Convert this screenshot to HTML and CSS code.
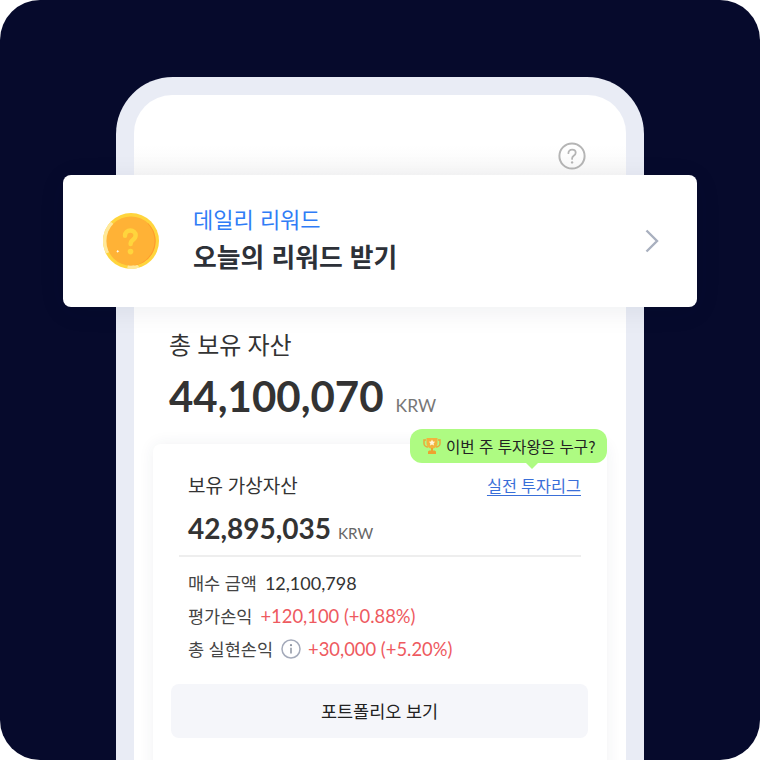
FILE: index.html
```html
<!DOCTYPE html>
<html lang="ko">
<head>
<meta charset="utf-8">
<title>데일리 리워드</title>
<link rel="stylesheet" href="styles.css">
</head>
<body>
<main class="stage">
  <div class="phone">
    <div class="screen">
      <div class="topbar">
        <svg class="help" width="28" height="28" viewBox="0 0 28 28" fill="none">
          <circle cx="14" cy="14" r="12.6" stroke="#b5b5b5" stroke-width="2"/>
          <path d="M10.4 11.2c0-2.2 1.6-3.6 3.7-3.6s3.6 1.3 3.6 3.1c0 1.5-.9 2.3-2 3.1-1 .7-1.6 1.3-1.6 2.6v.5" stroke="#b5b5b5" stroke-width="1.8" stroke-linecap="round"/>
          <circle cx="14.1" cy="20.4" r="1.2" fill="#b5b5b5"/>
        </svg>
      </div>
      <section class="assets">
        <h2 class="assets-label">총 보유 자산</h2>
        <p class="assets-total"><strong>44,100,070</strong><span>KRW</span></p>
      </section>
      <section class="card">
        <div class="card-head">
          <span class="card-title">보유 가상자산</span>
          <a class="league" href="#">실전 투자리그</a>
        </div>
        <p class="card-total"><strong>42,895,035</strong><span>KRW</span></p>
        <ul class="stats">
          <li><span class="stat-label">매수 금액</span><span class="amount">12,100,798</span></li>
          <li><span class="stat-label">평가손익</span><span class="gain">+120,100 (+0.88%)</span></li>
          <li><span class="stat-label">총 실현손익</span>
            <svg class="info" width="20" height="20" viewBox="0 0 20 20" fill="none">
              <circle cx="10" cy="10" r="9" stroke="#a4aaba" stroke-width="1.500"/>
              <circle cx="10" cy="6.200" r="1.100" fill="#8d93a1"/>
              <path d="M10 8.800v5.600" stroke="#8d93a1" stroke-width="1.500"/>
            </svg>
            <span class="gain">+30,000 (+5.20%)</span></li>
        </ul>
        <button class="portfolio" type="button">포트폴리오 보기</button>
      </section>
    </div>
  </div>

  <aside class="banner">
    <svg class="coin" width="56" height="56" viewBox="0 0 58 58">
      <circle cx="29" cy="29" r="29" fill="#ffd53d"/>
      <path d="M8 9A29 29 0 0 0 3 42L7 40.500A25 25 0 0 1 11.500 12Z" fill="#ffe99a"/>
      <path d="M25 57.800A29 29 0 0 0 38 56.500L35 53H26Z" fill="#ffe99a"/>
      <circle cx="29" cy="29" r="25.500" fill="#ffb236"/>
      <path d="M47 11A25.500 25.500 0 0 1 26 54.400 25.500 25.500 0 0 0 46 11Z" fill="#ff9a2e"/>
      <path d="M22.800 23.500c0-3.400 2.500-5.300 5.500-5.300s5.500 2.100 5.500 4.900c0 2.400-1.300 3.600-2.900 4.800-1.500 1.100-2.300 2.100-2.300 4.300" fill="none" stroke="#ffd53d" stroke-width="4.600" stroke-linecap="round"/>
      <circle cx="28.500" cy="40" r="2.900" fill="#ffd53d"/>
      <path d="M15.300 38l.5 1.200 1.200.5-1.200.5-.5 1.200-.5-1.200-1.200-.5 1.200-.5Z" fill="#fff"/>
    </svg>
    <div class="banner-text">
      <p class="banner-sub">데일리 리워드</p>
      <p class="banner-title">오늘의 리워드 받기</p>
    </div>
    <svg class="chevron" width="16" height="24" viewBox="0 0 16 24" fill="none">
      <path d="M2.500 1.500L13 12 2.500 22.500" stroke="#a9b0bf" stroke-width="2.400"/>
    </svg>
  </aside>

  <div class="tip">
    <svg class="trophy" width="18" height="18" viewBox="0 0 18 18">
      <path d="M3 3H1v3.500C1 8.500 3 10 5 10M15 3h2v3.500c0 2-2 3.500-4 3.500" fill="none" stroke="#e9a93a" stroke-width="1.500"/>
      <path d="M3.500 1h11v5c0 3.500-2.500 5.500-5.500 5.500S3.500 9.500 3.500 6Z" fill="#f2b33d"/>
      <path d="M8 11h2v3H8ZM5 15c0-1 1-1.500 2-1.500h4c1 0 2 .5 2 1.500v2H5Z" fill="#eda22f"/>
      <path d="M9 2.500l1 2 2.200.3-1.600 1.500.4 2.200-2-1-2 1 .4-2.200-1.600-1.500L8 4.500Z" fill="#fff6d8"/>
    </svg>
    <span>이번 주 투자왕은 누구?</span>
  </div>
</main>
</body>
</html>
```
FILE: styles.css
```css
* { box-sizing: border-box; }
html, body { margin: 0; padding: 0; background: #fff; }
body { width: 760px; height: 760px; overflow: hidden; font-family: Lato, "Noto Sans CJK KR", sans-serif; color: #333; }
h2, p, ul { margin: 0; padding: 0; font-weight: 400; }
ul { list-style: none; }

.stage { position: relative; width: 760px; height: 760px; overflow: hidden; border-radius: 40px; background: #060a2c; padding: 77px 116px 0; }
.phone { width: 528px; height: 760px; padding: 18px 18px 0; background: #e9ecf5; border-radius: 57px 57px 0 0; }
.screen { height: 100%; padding: 0 19px; background: linear-gradient(#fff 50px, #f8f8f8 80px, #fff 200px); border-radius: 38px 38px 0 0; }

.topbar { display: flex; justify-content: flex-end; padding: 47px 21px 0 0; height: 233px; }
.help { display: block; }

.assets { padding-left: 16px; }
.assets-label { font-size: 24px; line-height: 34px; color: #333; }
.assets-total { display: flex; align-items: baseline; gap: 12px; margin-top: 6px; }
.assets-total strong { font-size: 42px; line-height: 56px; font-weight: 700; }
.assets-total span { font-size: 17.500px; line-height: 1; color: #777; }

.card { margin-top: 20px; height: 340px; padding: 29px 18px 0; background: #fff; border-radius: 8px; box-shadow: 0 0 16px rgba(40, 50, 80, .07); }
.card-head { display: flex; justify-content: space-between; align-items: center; padding: 0 8px 0 17px; line-height: 26px; }
.card-title { font-size: 19px; color: #333; }
.league { font-size: 16.300px; color: #3a6fd8; text-decoration: underline; text-underline-offset: 3px; }
.card-total { display: flex; align-items: baseline; gap: 7px; margin: 9px 8px 0 8px; padding: 0 0 7px 9px; border-bottom: 2px solid #eeeeee; }
.card-total strong { font-size: 28px; line-height: 40px; font-weight: 700; }
.card-total span { font-size: 15.200px; line-height: 1; color: #666; }

.stats { padding: 9px 0 0 17px; }
.stats li { display: flex; align-items: center; height: 33px; }
.stat-label { font-size: 17.500px; margin-right: 8px; color: #444; }
.amount { font-size: 18px; }
.info { margin-right: 7px; }
.gain { font-size: 18.400px; color: #ee5a5f; }

.portfolio { display: block; width: 417px; height: 54px; margin-top: 19px; padding: 0 0 2px; border: 0; border-radius: 8px; background: #f5f6fa; color: #222; font-family: inherit; font-size: 17.500px; }

.banner { position: absolute; left: 63px; top: 175px; width: 634px; height: 132px; display: flex; align-items: center; padding: 0 37px 0 40px; background: #fff; border-radius: 8px; box-shadow: 0 4px 28px rgba(20, 30, 60, .07); }
.coin { flex: none; }
.banner-text { flex: 1; padding-left: 34px; font-family: "Noto Sans CJK KR", sans-serif; }
.banner-sub { font-size: 22px; line-height: 32px; color: #2f7cf6; margin-top: -6px; }
.banner-title { font-size: 25.800px; line-height: 38px; margin-top: 3px; font-weight: 700; color: #2d3138; }

.tip { position: absolute; left: 410px; top: 429px; width: 197px; height: 34px; display: flex; align-items: center; gap: 5px; padding-left: 13px; background: #aefb82; border-radius: 12px; font-family: "Noto Sans CJK KR", sans-serif; font-size: 15.600px; color: #222; }
.tip::after { content: ""; position: absolute; left: 116px; top: 34px; border: 6px solid transparent; border-top-color: #aefb82; border-bottom: 0; }
.trophy { flex: none; }
```
